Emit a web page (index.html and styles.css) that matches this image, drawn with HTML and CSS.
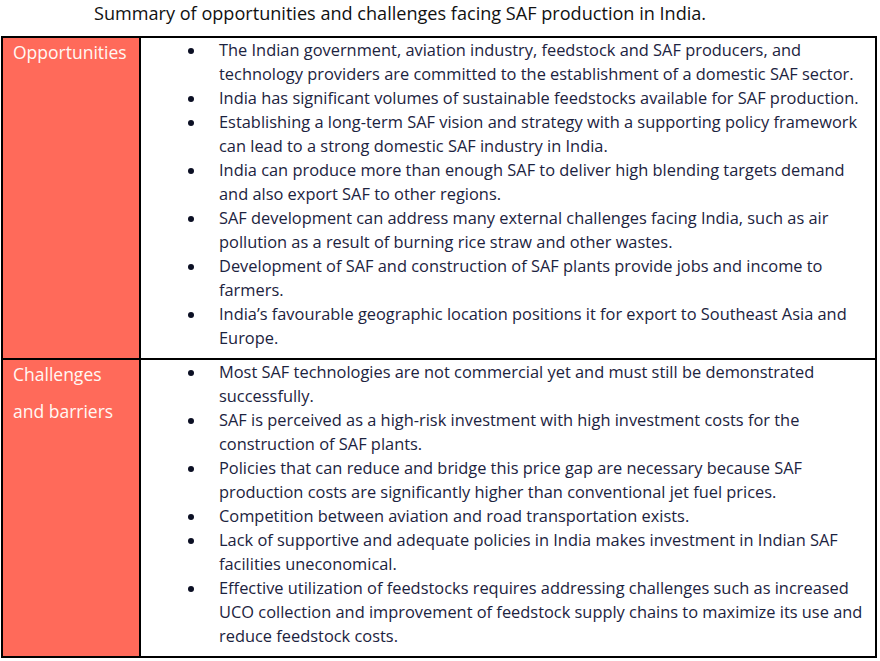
FILE: index.html
```html
<!DOCTYPE html>
<html>
<head>
<meta charset="utf-8">
<link rel="stylesheet" href="styles.css">
</head>
<body>
<p class="caption">Summary of opportunities and challenges facing SAF production in India.</p>
<table class="summary">
  <tr class="row-opp">
    <th class="label"><span>Opportunities</span></th>
    <td class="items">
      <ul>
        <li>The Indian government, aviation industry, feedstock and SAF producers, and technology providers are committed to the establishment of a domestic SAF sector.</li>
        <li>India has significant volumes of sustainable feedstocks available for SAF production.</li>
        <li>Establishing a long-term SAF vision and strategy with a supporting policy framework can lead to a strong domestic SAF industry in India.</li>
        <li>India can produce more than enough SAF to deliver high blending targets demand and also export SAF to other regions.</li>
        <li>SAF development can address many external challenges facing India, such as air pollution as a result of burning rice straw and other wastes.</li>
        <li>Development of SAF and construction of SAF plants provide jobs and income to farmers.</li>
        <li>India’s favourable geographic location positions it for export to Southeast Asia and Europe.</li>
      </ul>
    </td>
  </tr>
  <tr class="row-chal">
    <th class="label"><span>Challenges</span><span>and barriers</span></th>
    <td class="items">
      <ul>
        <li>Most SAF technologies are not commercial yet and must still be demonstrated successfully.</li>
        <li>SAF is perceived as a high-risk investment with high investment costs for the construction of SAF plants.</li>
        <li>Policies that can reduce and bridge this price gap are necessary because SAF production costs are significantly higher than conventional jet fuel prices.</li>
        <li>Competition between aviation and road transportation exists.</li>
        <li>Lack of supportive and adequate policies in India makes investment in Indian SAF facilities uneconomical.</li>
        <li>Effective utilization of feedstocks requires addressing challenges such as increased UCO collection and improvement of feedstock supply chains to maximize its use and reduce feedstock costs.</li>
      </ul>
    </td>
  </tr>
</table>
</body>
</html>
```
FILE: styles.css
```css
html, body {
  margin: 0;
  padding: 0;
  background: #ffffff;
}
body {
  font-family: "Open Sans", sans-serif;
  width: 880px;
  height: 661px;
  overflow: hidden;
}
.caption {
  margin: 0;
  padding: 1px 0 0 94px;
  height: 36px;
  box-sizing: border-box;
  font-size: 18.1px;
  line-height: 24px;
  color: #111111;
}
.summary {
  margin-left: 1px;
  width: 876px;
  border-collapse: collapse;
  border: 2px solid #000000;
}
.summary th, .summary td {
  border: 2px solid #000000;
  vertical-align: top;
}
.label {
  width: 126px;
  background: #ff6a5a;
  color: #fff8f4;
  font-weight: normal;
  font-size: 17.5px;
  text-align: left;
  padding: 2px 0 0 10px;
}
.label span {
  display: block;
  line-height: 24px;
}
.label span + span {
  margin-top: 13px;
}
.items {
  padding: 0 8px 8px 47px;
  color: #1c2340;
  font-size: 16.4px;
  line-height: 24px;
}
.items ul {
  margin: 0;
  padding: 0;
  list-style: none;
}
.items li {
  display: flex;
  align-items: flex-start;
}
.items li::before {
  content: "";
  flex: 0 0 6px;
  height: 6px;
  margin: 10px 25px 0 0;
  border-radius: 50%;
  background: #0b0f24;
}
.row-opp .items {
  height: 312px;
}
```
